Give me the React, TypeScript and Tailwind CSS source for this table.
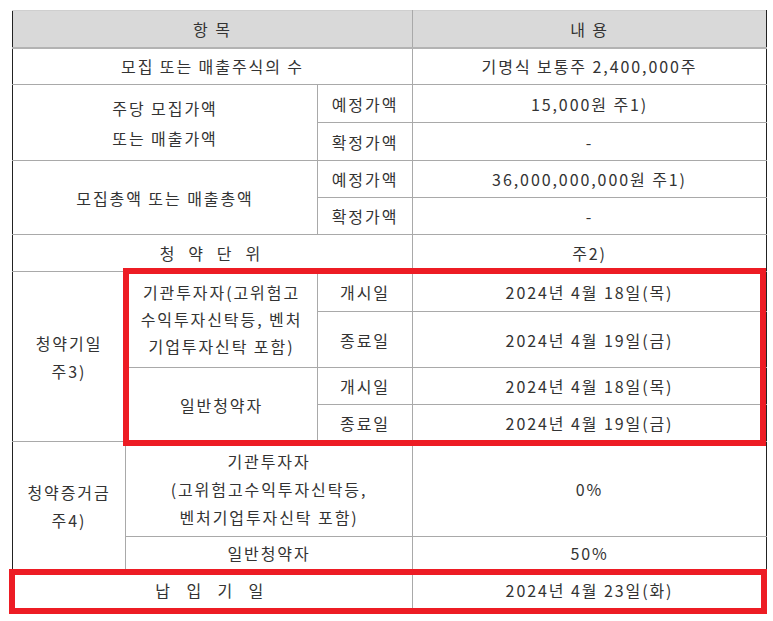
import React from 'react';

const cell = 'border border-[#a9a9a9] text-center align-middle px-1';

export default function App() {
  return (
    <div
      className="relative w-[773px] h-[621px] bg-white text-[#333] text-[16px] tracking-[0.12em]"
      style={{ fontFamily: '"Noto Sans CJK KR", "Noto Sans", sans-serif' }}
    >
      <div className="pl-[12px] pt-[10px]">
        <table className="table-fixed border-collapse w-[754px] border-l border-r border-l-[#222] border-r-[#222]">
          <colgroup>
            <col className="w-[113px]" />
            <col className="w-[192px]" />
            <col className="w-[95px]" />
            <col className="w-[354px]" />
          </colgroup>
          <tbody>
            <tr className="h-[37px] bg-[#d9d9d9]">
              <td colSpan={3} className={`${cell} border-t-[#cfcfcf] border-b-2 border-b-[#b3b3b3] border-l-[#222]`}>
                항 목
              </td>
              <td className={`${cell} border-t-[#cfcfcf] border-b-2 border-b-[#b3b3b3] border-r-[#222]`}>내 용</td>
            </tr>
            <tr className="h-[37px]">
              <td colSpan={3} className={`${cell} border-l-[#222]`}>모집 또는 매출주식의 수</td>
              <td className={`${cell} border-r-[#222]`}>기명식 보통주 2,400,000주</td>
            </tr>
            <tr className="h-[38px]">
              <td colSpan={2} rowSpan={2} className={`${cell} border-l-[#222] leading-[30px]`}>
                주당 모집가액
                <br />
                또는 매출가액
              </td>
              <td className={cell}>예정가액</td>
              <td className={`${cell} border-r-[#222]`}>15,000원 주1)</td>
            </tr>
            <tr className="h-[38px]">
              <td className={cell}>확정가액</td>
              <td className={`${cell} border-r-[#222]`}>-</td>
            </tr>
            <tr className="h-[37px]">
              <td colSpan={2} rowSpan={2} className={`${cell} border-l-[#222]`}>
                모집총액 또는 매출총액
              </td>
              <td className={cell}>예정가액</td>
              <td className={`${cell} border-r-[#222]`}>36,000,000,000원 주1)</td>
            </tr>
            <tr className="h-[37px]">
              <td className={cell}>확정가액</td>
              <td className={`${cell} border-r-[#222]`}>-</td>
            </tr>
            <tr className="h-[37px]">
              <td colSpan={3} className={`${cell} border-l-[#222] tracking-[0.32em]`}>청 약 단 위</td>
              <td className={`${cell} border-r-[#222]`}>주2)</td>
            </tr>
            <tr className="h-[40px]">
              <td rowSpan={4} className={`${cell} border-l-[#222] leading-[28px]`}>
                청약기일
                <br />
                주3)
              </td>
              <td rowSpan={2} className={`${cell} leading-[27px]`}>
                기관투자자(고위험고
                <br />
                수익투자신탁등, 벤처
                <br />
                기업투자신탁 포함)
              </td>
              <td className={cell}>개시일</td>
              <td className={`${cell} border-r-[#222]`}>2024년 4월 18일(목)</td>
            </tr>
            <tr className="h-[56px]">
              <td className={cell}>종료일</td>
              <td className={`${cell} border-r-[#222]`}>2024년 4월 19일(금)</td>
            </tr>
            <tr className="h-[37px]">
              <td rowSpan={2} className={cell}>일반청약자</td>
              <td className={cell}>개시일</td>
              <td className={`${cell} border-r-[#222]`}>2024년 4월 18일(목)</td>
            </tr>
            <tr className="h-[37px]">
              <td className={cell}>종료일</td>
              <td className={`${cell} border-r-[#222]`}>2024년 4월 19일(금)</td>
            </tr>
            <tr className="h-[95px]">
              <td rowSpan={2} className={`${cell} border-l-[#222] leading-[28px]`}>
                청약증거금
                <br />
                주4)
              </td>
              <td colSpan={2} className={`${cell} leading-[28px]`}>
                기관투자자
                <br />
                (고위험고수익투자신탁등,
                <br />
                벤처기업투자신탁 포함)
              </td>
              <td className={`${cell} border-r-[#222]`}>0%</td>
            </tr>
            <tr className="h-[33px]">
              <td colSpan={2} className={cell}>일반청약자</td>
              <td className={`${cell} border-r-[#222]`}>50%</td>
            </tr>
            <tr className="h-[40px]">
              <td colSpan={3} className={`${cell} border-l-[#222] tracking-[0.4em]`}>납 입 기 일</td>
              <td className={`${cell} border-r-[#222]`}>2024년 4월 23일(화)</td>
            </tr>
          </tbody>
        </table>
      </div>

      {/* red highlight boxes */}
      <div className="absolute left-[123px] top-[268px] w-[643px] h-[178px] border-[6px] border-[#ed1c24]" />
      <div className="absolute left-[9px] top-[569px] w-[758px] h-[45px] border-[6px] border-[#ed1c24]" />
    </div>
  );
}
